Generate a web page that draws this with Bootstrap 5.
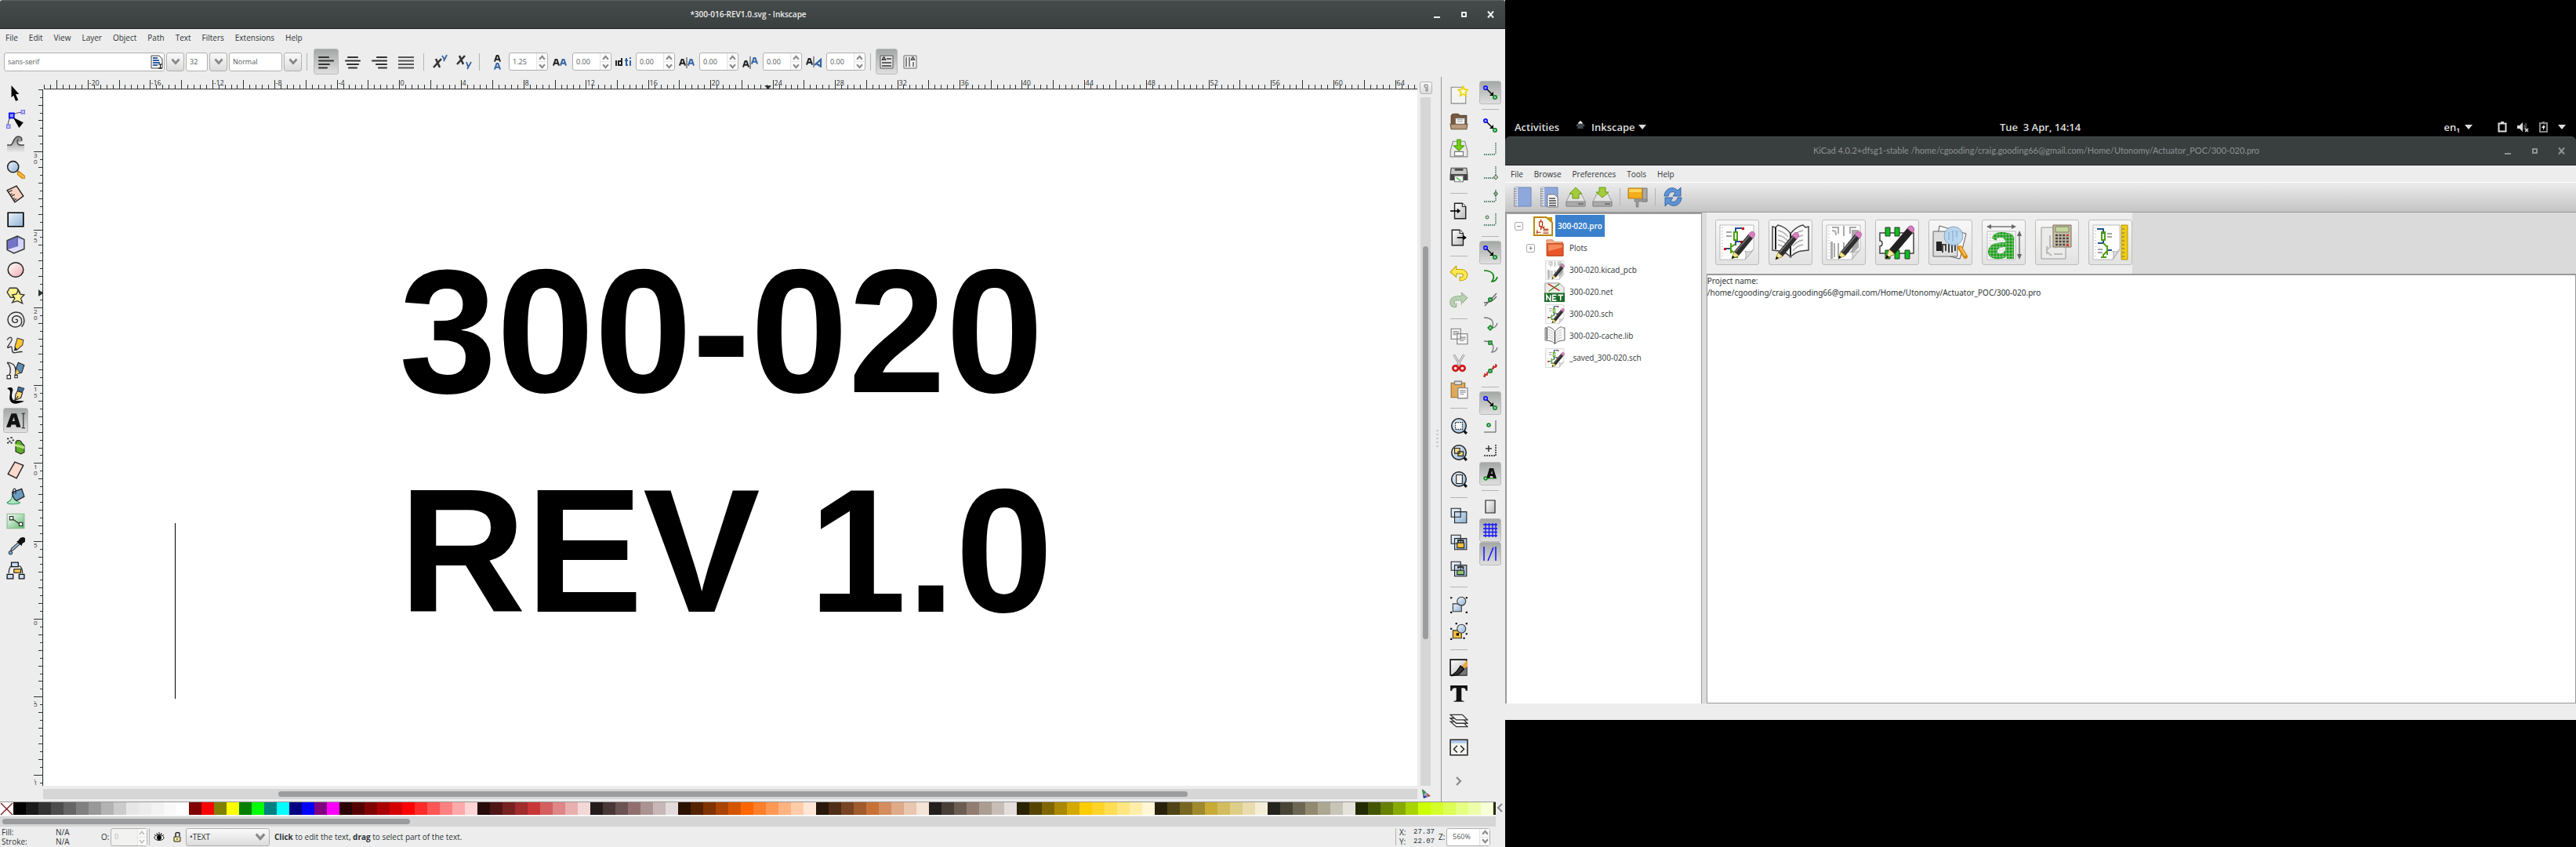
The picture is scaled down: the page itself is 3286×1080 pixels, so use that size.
<!DOCTYPE html>
<html lang="en">
<head>
<meta charset="utf-8">
<meta name="viewport" content="width=device-width, initial-scale=1">
<title>Inkscape and KiCad desktop</title>
<link href="https://cdn.jsdelivr.net/npm/bootstrap@5.3.0/dist/css/bootstrap.min.css" rel="stylesheet">
<style>
:root{--ui:#ededed;--line:#b0b0ad;--ink:#2e3436}
body{font-family:"Open Sans","Noto Sans",sans-serif;font-size:10px;line-height:14px;color:var(--ink);background:#000;overflow:hidden}
svg{display:block;flex:none}
button{padding:0;border:0;background:none;color:inherit;display:flex;align-items:center;justify-content:center;flex:none}
input,select{font:inherit;color:#555b5c;border:0;background:none;min-width:0;padding:0;outline:0}
.i22{width:24px;height:24px}.i18{width:20px;height:20px}
.win-ink{flex:1920 1 0;min-width:0;background:var(--ui)}
.win-side{flex:1366 1 0;min-width:0;padding-top:147px;padding-bottom:162px}
.titlebar{height:37px;background:linear-gradient(#454b4b,#3a3f3f);border-top:1px solid #5a6060;border-bottom:1px solid #1d2223;color:#eee;border-radius:3px 3px 0 0;font-weight:600;padding:0 11px 1px 0}
.titlebar.idle{background:#393f3f;color:#8d9191;font-family:Lato,"Open Sans",sans-serif;font-size:11px;font-weight:400;border-top-color:#4c5252;border-radius:6px 6px 0 0}
.wbtn{width:16px;height:16px;margin-left:18px}
.menus a{color:var(--ink);text-decoration:none}
.ink-menu{height:22px;padding:0 7px;gap:14px}
.textbar{height:39px;padding:3px 5px;gap:2px;font-size:9px;flex:none}
.fld{height:24px;border:1px solid var(--line);border-radius:3px;background:#fff;padding-left:4px}
.grad{background:linear-gradient(#fafafa,#dcdcdc);border:1px solid var(--line);border-radius:3px}
.drop{width:23px;height:24px}
.vsep{width:1px;height:22px;background:#b4b4b2;flex:none}
.pressed{background:linear-gradient(#a3a8a5,#dfdfdf);border:1px solid #b9bbb9;border-radius:3px}
.spin{width:50px;height:23px;border:1px solid var(--line);border-radius:3px;background:#fff;padding-left:4px;flex:none}
.spin input{width:30px}
.spin .steps{width:13px;border-left:1px solid #e4e4e4;background:#fafafa}
.spin .steps button{flex:1;width:100%}
.spin .steps button+button{border-top:1px solid #e4e4e4}
.spin.off{background:#f2f2f1}.spin.off input{color:#bbb}
.lbl{width:24px;height:24px;margin-left:3px}
.toolbox{width:35px;padding:6px 0 0 4px;flex:none}
.tool{width:32px;height:32px}
.trough{background:#d6d6d6}
.thumb{background:#9b9c9e;border-radius:4px}
.cmds{width:45px;border-left:1px solid #999;padding-top:6px}
.cmds .tool{width:34px;height:34px}
.snaps{width:37px;padding:5px 1px 0 0}
.snaps button{width:28px;height:30px}
.hsep{width:22px;height:1px;margin:6px 0 5px;background:#b4b4b2;flex:none}
.art{background:#fff;padding:168px 0 0 453px;position:relative;overflow:hidden;font:bold 224px/280px "Liberation Sans",Arial,sans-serif;color:#000;white-space:nowrap}
.caret-bar{position:absolute;left:167px;top:553px;width:1px;height:224px;background:#000}
.swatches{height:17px;overflow:hidden;background:#fff}
.swatches i{width:16px;height:16px;flex:none}
.status{height:26px;line-height:12px;flex:none}
.status .spin{font-size:9px}
.mono{font-family:"Liberation Mono",monospace;font-size:9px}
.topbar{height:27px;color:#ddd;font-weight:600;font-size:13px;padding:3px 13px 0 12px}
.topbar a{color:inherit;text-decoration:none}
.ki-menu{height:21px;background:var(--ui);padding:0 7px;gap:14px}
.ki-tools{height:39px;background:linear-gradient(#ececec,#c4c4c4);border-top:1px solid #fff;border-bottom:1px solid #999;padding:0 8px 2px;gap:6px}
.ki-tools button,.ki-tools svg{width:28px;height:28px}
.ki-tools .vsep{margin:0 2px}
.tree{flex:248 1 0;background:#fff;border:2px solid #9c9c9c;border-width:2px 1px 1px 2px;padding-top:1px;margin-bottom:-1px;min-width:0}
.node{height:28px;gap:2px}
.node svg.fi{width:27px;height:27px}
.node span{padding:0 3px}
.exp{width:11px;height:11px;border:1px solid #aaa;border-radius:2px;background:#fff;line-height:9px;color:#555}
.sash{width:6px;background:#dcdcdc}
.launch{height:78px;background:#dadada;flex:none}
.launch-in{background:var(--ui);padding:9px 0 0 11px;gap:12px;width:543px}
.launch .grad{width:56px;height:58px;border-color:#bdbdbd;background:linear-gradient(#f7f7f7,#e2e2e2)}
.launch svg{width:48px;height:50px}
.log{background:#fff;border:1px solid #999;border-top-width:2px;font-family:"Noto Sans","Open Sans",sans-serif}
.log p{margin:0;line-height:15px}
</style>
<script src="https://cdn.jsdelivr.net/npm/bootstrap@5.3.0/dist/js/bootstrap.bundle.min.js"></script>
</head>
<body>
<svg width="0" height="0" class="position-absolute" aria-hidden="true">
<defs>
<linearGradient id="gb" x1="0" y1="0" x2="1" y2="1"><stop offset="0" stop-color="#eef4fb"/><stop offset="1" stop-color="#8fb3d5"/></linearGradient>
<linearGradient id="gg" x1="0" y1="0" x2="1" y2="1"><stop offset="0" stop-color="#fff"/><stop offset="1" stop-color="#b8b8b8"/></linearGradient>
<linearGradient id="gp" x1="0" y1="0" x2="1" y2="1"><stop offset="0" stop-color="#fff"/><stop offset="1" stop-color="#f4a9b0"/></linearGradient>
<linearGradient id="gk" x1="0" y1="0" x2="0" y2="1"><stop offset="0" stop-color="#888"/><stop offset="1" stop-color="#eee"/></linearGradient>
<linearGradient id="gn" x1="0" y1="0" x2="1" y2="1"><stop offset="0" stop-color="#fff"/><stop offset="1" stop-color="#5cb86a"/></linearGradient>
<symbol id="up" viewBox="0 0 8 6"><path d="M1 5 4 1.500 7 5" fill="none" stroke="#888" stroke-width="1.800"/></symbol>
<symbol id="down" viewBox="0 0 8 6"><path d="M1 1 4 4.500 7 1" fill="none" stroke="#888" stroke-width="1.800"/></symbol>
<symbol id="min" viewBox="0 0 16 16"><path d="M4 11h8v2H4z" fill="currentColor"/></symbol>
<symbol id="max" viewBox="0 0 16 16"><path d="M6 6h5v5H6z" fill="none" stroke="currentColor" stroke-width="2"/></symbol>
<symbol id="cls" viewBox="0 0 16 16"><path d="M5 4.500l7 8M12 4.500l-7 8" stroke="currentColor" stroke-width="2"/></symbol>
<symbol id="al" viewBox="0 0 24 24"><g stroke="#333" stroke-width="2.200" stroke-linecap="round"><path d="M3 6h12M3 10.500h18M3 15h13M3 19.500h10"/></g></symbol>
<symbol id="ac" viewBox="0 0 24 24"><g stroke="#333" stroke-width="2.200" stroke-linecap="round"><path d="M6 6h12M3 10.500h18M5 15h14M7 19.500h10"/></g></symbol>
<symbol id="ar" viewBox="0 0 24 24"><g stroke="#333" stroke-width="2.200" stroke-linecap="round"><path d="M9 6h12M3 10.500h18M8 15h13M11 19.500h10"/></g></symbol>
<symbol id="aj" viewBox="0 0 24 24"><g stroke="#555" stroke-width="2.200"><path d="M2 6h20M2 10.500h20M2 15h20M2 19.500h20"/></g></symbol>
<symbol id="sup" viewBox="0 0 24 24"><path d="M7 8l5 11M14 8 4 19" stroke="#333" stroke-width="2.600" fill="none"/><path d="M15 4l3 5M21 3l-4 8" stroke="#3465a4" stroke-width="1.800" fill="none"/></symbol>
<symbol id="sub" viewBox="0 0 24 24"><path d="M6 4l5 11M13 4 3 15" stroke="#333" stroke-width="2.600" fill="none"/><path d="M15 12l2 6M21 12l-5 9" stroke="#3465a4" stroke-width="1.800" fill="none"/></symbol>
<symbol id="ga" viewBox="0 0 10 10"><path d="M1 9.500 4 1h2l3 8.500M2.500 6.500h5" fill="none" stroke="currentColor" stroke-width="2.200"/></symbol>
<symbol id="t-sel" viewBox="0 0 22 22"><path d="M6 1l9 10h-4l3 7-3 1-2.500-6.500L6 15z"/></symbol>
<symbol id="t-node" viewBox="0 0 22 22"><path d="M2 19C2 8 8 3 19 3" fill="none" stroke="#555"/><path d="M.5 17.500h4v4h-4zM17.500.5h4v4h-4z" fill="#c5c5ff" stroke="#6a6af0"/><path d="M3.500 4h5.500v5.500H3.500z" fill="#9494ff" stroke="#00f" stroke-width="1.500"/><path d="M8 9l12 6-5 6z"/></symbol>
<symbol id="t-tweak" viewBox="0 0 22 22"><path d="M1 12h4c3 0 3-9 8-10 4-.5 6 2 5 5-1 2-3 2-4 0 0 0-2 5 2 5h5v9H1z" fill="url(#gk)"/><path d="M1 12h4c3 0 3-9 8-10 4-.5 6 2 5 5M14 5c-2 3-1 7 3 7h4" fill="none" stroke="#444" stroke-width="1.400"/></symbol>
<symbol id="t-zoom" viewBox="0 0 22 22"><path d="M13 13l3 2" stroke="#777" stroke-width="2"/><path d="M15 16l5 4" stroke="#c77c00" stroke-width="5" stroke-linecap="round"/><path d="M15 16l5 4" stroke="#f9b83c" stroke-width="3" stroke-linecap="round"/><circle cx="8" cy="8" r="6.500" fill="url(#gb)" stroke="#222" stroke-width="1.400"/></symbol>
<symbol id="t-meas" viewBox="0 0 22 22"><path d="M1 6l11-5 8 12-10 7z" fill="#fbd3c2" stroke="#222" stroke-width="1.300"/><path d="M3 8l4-2M5 11l2-1M6 13l4-2M8 16l2-1M9 18l3-2" stroke="#222"/></symbol>
<symbol id="t-rect" viewBox="0 0 22 22"><path d="M2 3h18v16H2z" fill="url(#gb)" stroke="#000" stroke-width="1.500"/></symbol>
<symbol id="t-box" viewBox="0 0 22 22"><path d="M1 6 13 1l8 4v11l-12 5-8-4z" fill="#b4b4ee"/><path d="M9 4l12 1v11l-7-2z" fill="#d4d4fa"/><path d="M1 6l12-5v12L1 17z" fill="#7474c4"/><path d="M1 17l12-4 8 3-12 5z" fill="#dcdcff"/><path d="M13 1v12" stroke="#50509a"/><path d="M1 6 13 1l8 4v11l-12 5-8-4z" fill="none" stroke="#333" stroke-width="1.300"/></symbol>
<symbol id="t-ell" viewBox="0 0 22 22"><ellipse cx="11" cy="11" rx="9" ry="8.500" fill="url(#gp)" stroke="#222" stroke-width="1.400"/></symbol>
<symbol id="t-star" viewBox="0 0 22 22"><path d="M4 3h8l4 5-4 6H5L1 8z" fill="#fbf28c" stroke="#333" stroke-width="1.200"/><path d="M14 5l2 5 5 1-4 4 2 6-6-3-6 2 3-5-3-4 5-1z" fill="#fbf28c" stroke="#333" stroke-width="1.200"/></symbol>
<symbol id="t-spi" viewBox="0 0 22 22"><path d="M11 11c1-2 3 0 2 2-2 2-6 1-6-2 0-4 4-6 8-4s4 9 0 11c-5 3-12 0-13-6C1 6 7 1 13 2c5 0 8 5 8 10 0 3-1 5-3 7" fill="none" stroke="#333" stroke-width="1.300"/></symbol>
<symbol id="t-pen" viewBox="0 0 22 22"><path d="M1 5c3-5 7-3 5 1-2 4-6 8-4 8s3-2 4-1c2 2-1 6 3 7 4 0 6-2 10-1" fill="none" stroke="#333" stroke-width="1.200"/><path d="M10 13l3-10 7 2-1 6-7 6z" fill="#ffc52e" stroke="#444"/><path d="M10 13l-1 5 4-2z" fill="#222"/></symbol>
<symbol id="t-bez" viewBox="0 0 22 22"><path d="M1 2c7 1 11 2 10 16M1 2c4 4 5 10 2 16" fill="none" stroke="#333" stroke-width="1.200"/><path d="M1 17h4v4H1zM10 17h3v3h-3z" fill="#fff" stroke="#222"/><path d="M14 2l7 3-3 9-6 1-1-5z" fill="#5b8db5" stroke="#222"/><path d="M12 9l-2 8 6-3z" fill="#f7cf62" stroke="#222" stroke-width=".7"/></symbol>
<symbol id="t-cal" viewBox="0 0 22 22"><path d="M1 3c5-3 8 0 6 4-1 4-1 8 2 10 3 1 6 0 12 1-6 2-10 4-14 2-6-4-1-11-3-15z"/><path d="M14 1l7 2-2 4-6-1z" fill="#3e6e9a" stroke="#222" stroke-width=".8"/><path d="M13 6l6 2-2 6-7 3 1-7z" fill="#fbd77c" stroke="#222"/><path d="M10 17l4-5" stroke="#222"/></symbol>
<symbol id="t-text" viewBox="0 0 22 22"><path d="M0 19 6 3h6l5 16h-5l-1-3H6l-1 3zM7 12h3L9 7z" fill="#111"/><path d="M18 3h4M18 20h4M20 3v17" stroke="#222"/></symbol>
<symbol id="t-spray" viewBox="0 0 22 22"><path d="M1 3h2M5 2h2M3 6h2M7 5h2M1 8h2M5 8h2" stroke="#222" stroke-width="1.600"/><path d="M11 8c0-4 6-4 7 0l3 3v8l-4 2-6-3z" fill="#5cae28" stroke="#222"/><path d="M10 9l11 3v3l-11-3z" fill="#b3e37a"/></symbol>
<symbol id="t-era" viewBox="0 0 22 22"><path d="M10 1l10 4-8 15-10-5z" fill="#fbd9cc" stroke="#222" stroke-width="1.300"/></symbol>
<symbol id="t-buck" viewBox="0 0 22 22"><path d="M1 19c3-2 5-2 6-8l3-4c2 7-1 10 6 12 0 2-15 3-15 0z" fill="#aee3c0" stroke="#396"/><path d="M7 7l11-4 3 9-9 5c-3-2-5-6-5-10z" fill="#6b9cc0" stroke="#222" stroke-width="1.200"/><path d="M9 9c-3-5 1-8 2-5v5" fill="none" stroke="#222"/></symbol>
<symbol id="t-grad" viewBox="0 0 22 22"><path d="M1 3h20v17H1z" fill="url(#gn)" stroke="#86b78d"/><path d="M6 8l10 7" stroke="#222"/><path d="M4 6h4v4H4zM15 13h4v4h-4z" fill="#fff" stroke="#222"/></symbol>
<symbol id="t-drop" viewBox="0 0 22 22"><path d="M14 7l2 2-8 7-3 1 1-3z" fill="#9bc3e6" stroke="#333"/><path d="M12 6l2-1c2-4 6-5 8-3s0 5-3 6l-1 3z" fill="#111"/><circle cx="5" cy="19" r="2" fill="#7fa9cf" stroke="#345"/></symbol>
<symbol id="t-conn" viewBox="0 0 22 22"><path d="M6 5C3 7 3 11 3 14M15 5c4 2 4 6 4 9" fill="none" stroke="#333" stroke-width="1.200"/><path d="M6 1h8v5H6zM1 15h7v5H1zM15 15h6v5h-6z" fill="#c9defa" stroke="#111" stroke-width="1.200"/><path d="M9 9h8v4H9z" fill="#ffc64a" stroke="#111"/></symbol>
<symbol id="c-new" viewBox="0 0 22 22"><path d="M2 2h13l4 4v15H2z" fill="#f4f4f2" stroke="#888"/><path d="M16 1l1.500 3.500 4 .5-3 3 1 4-3.500-2-3.500 2 1-4-3-3 4-.5z" fill="#fffbd0" stroke="#edd400" stroke-width="1.500"/></symbol>
<symbol id="c-open" viewBox="0 0 22 22"><path d="M2 4l2-2h6l2 2h8v13H2z" fill="#7a5a3c" stroke="#54402c"/><path d="M7 7h11v10H7z" fill="#fff" stroke="#777"/><path d="M9 9h7M9 11h7" stroke="#999"/><path d="M1 14h20l-1 6H2z" fill="#b79a7c" stroke="#6b5238"/></symbol>
<symbol id="c-save" viewBox="0 0 22 22"><path d="M4 3h14l3 11v7H1v-7z" fill="#e8e8e6" stroke="#888"/><path d="M6 15h10v5H6z" fill="#fff" stroke="#777"/><path d="M9 1h4v7h4l-6 6-6-6h4z" fill="#73d216" stroke="#4a9a06"/></symbol>
<symbol id="c-print" viewBox="0 0 22 22"><path d="M2 3h18l1 8v6H1v-6z" fill="#c9c9c7" stroke="#444"/><path d="M1 10h20v7H1z" fill="#444"/><path d="M6 5h10" stroke="#333" stroke-width="2"/><path d="M6 12h10v7H6z" fill="#fff" stroke="#777"/><path d="M8 14l5 4" stroke="#7c7" stroke-width="2"/></symbol>
<symbol id="c-imp" viewBox="0 0 22 22"><path d="M6 2h9l4 4v14H6z" fill="url(#gg)" stroke="#222" stroke-width="1.300"/><path d="M15 2v4h4" fill="#fff" stroke="#222"/><path d="M1 11h10" stroke="#000" stroke-width="1.500"/><path d="M9 8l4 3-4 3z"/></symbol>
<symbol id="c-exp" viewBox="0 0 22 22"><path d="M3 2h9l4 4v14H3z" fill="url(#gg)" stroke="#222" stroke-width="1.300"/><path d="M12 2v4h4" fill="#fff" stroke="#222"/><path d="M9 11h9" stroke="#000" stroke-width="1.500"/><path d="M16 8l4 3-4 3z"/></symbol>
<symbol id="c-undo" viewBox="0 0 22 22"><path d="M8 2v4h6c10 1 9 14-2 13v-4c5 1 5-4 2-4H8v4L1 9z" fill="#fce94f" stroke="#c4a000" stroke-linejoin="round"/></symbol>
<symbol id="c-redo" viewBox="0 0 22 22"><path d="M14 2v4H9C-1 7-2 17 5 19h3v-4c-4 0-3-4 0-4h6v4l7-7z" fill="#b9d0b2" stroke="#7a9a72" stroke-dasharray="1.500 1"/></symbol>
<symbol id="c-copy" viewBox="0 0 22 22"><path d="M2 2h11v12H2zM9 8h12v12H9z" fill="#fafafa" stroke="#777"/><path d="M4 5h7M4 7h7M4 9h4M12 12h7M12 14h7M12 16h5" stroke="#888"/></symbol>
<symbol id="c-cut" viewBox="0 0 22 22"><path d="M5 1l8 13M17 1L9 14" stroke="#888" stroke-width="2.500"/><path d="M5 1l8 13M17 1L9 14" stroke="#eee"/><circle cx="7" cy="17" r="3" fill="none" stroke="#d01a1a" stroke-width="2.500"/><circle cx="15" cy="17" r="3" fill="none" stroke="#d01a1a" stroke-width="2.500"/></symbol>
<symbol id="c-paste" viewBox="0 0 22 22"><path d="M2 3h16v17H2z" fill="#e0a85a" stroke="#9a6a20"/><path d="M6 1h8v4H6z" fill="#ddd" stroke="#777"/><path d="M10 9h11v12H10z" fill="#fff" stroke="#777"/><path d="M12 12h7M12 14h7M12 16h5" stroke="#888"/></symbol>
<symbol id="lens" viewBox="0 0 22 22"><path d="M16 16l4 4" stroke="#111" stroke-width="3"/><circle cx="11" cy="11" r="8.500" fill="url(#gb)" stroke="#222" stroke-width="1.400"/></symbol>
<symbol id="c-zs" viewBox="0 0 22 22"><use href="#lens"/><path d="M7 7h8v8H7z" fill="#fff" stroke="#222" stroke-dasharray="1.500 1"/></symbol>
<symbol id="c-zd" viewBox="0 0 22 22"><use href="#lens"/><path d="M6 6h6v6H6zM10 10h6v5h-6z" fill="#f7d77c" stroke="#222"/></symbol>
<symbol id="c-zp" viewBox="0 0 22 22"><use href="#lens"/><path d="M8 6h7v10H8z" fill="#f2f2ee" stroke="#222"/></symbol>
<symbol id="c-dup" viewBox="0 0 22 22"><path d="M2 3h11v10H2zM6 7h14v13H6z" fill="url(#gb)" stroke="#222"/></symbol>
<symbol id="c-clo" viewBox="0 0 22 22"><use href="#c-dup"/><path d="M10 12v-3h6v3" fill="none" stroke="#222" stroke-width="1.500"/><path d="M9 12h8v6H9z" fill="#fbbf3a" stroke="#222"/></symbol>
<symbol id="c-unl" viewBox="0 0 22 22"><use href="#c-dup"/><path d="M10 11v-2h6v3" fill="none" stroke="#222" stroke-width="1.500"/><path d="M9 13h8v5H9z" fill="#8ec36c" stroke="#222"/></symbol>
<symbol id="c-grp" viewBox="0 0 22 22"><path d="M4 10h10v9H4z" fill="url(#gb)" stroke="#333"/><circle cx="14" cy="7" r="5" fill="url(#gb)" stroke="#333"/><path d="M1 2h2v2H1zM19 2h2v2h-2zM1 19h2v2H1zM19 19h2v2h-2z"/></symbol>
<symbol id="c-ung" viewBox="0 0 22 22"><path d="M4 10h10v9H4z" fill="#fbbf3a" stroke="#333"/><circle cx="14" cy="8" r="5" fill="url(#gb)" stroke="#333"/><path d="M7 1h2v2H7zM19 1h2v2h-2zM1 7h2v2H1zM1 19h2v2H1zM16 18h2v2h-2zM8 13h3v3H8zM19 13h2v2h-2z"/></symbol>
<symbol id="c-fill" viewBox="0 0 22 22"><path d="M1 2h19v18H1z" fill="url(#gg)" stroke="#111" stroke-width="1.500"/><path d="M20 5v15H3z" fill="#777"/><path d="M21 2v8l-4 2-2-3z" fill="#f2a63a"/><path d="M13 9l4 4-6 6-9 2 6-5z" fill="#333" stroke="#000"/></symbol>
<symbol id="c-T" viewBox="0 0 22 22"><path d="M1 1h20v6h-2c0-3-2-3-5-3v13c0 2 1 2 3 2v1H5v-1c2 0 3 0 3-2V4C5 4 3 4 3 7H1z" fill="#111"/></symbol>
<symbol id="c-lay" viewBox="0 0 22 22"><g fill="#f2f2f2" stroke="#333" stroke-width="1.200"><path d="M1 12h14l6 6H8z"/><path d="M1 8h14l6 6H8z"/><path d="M1 4h14l6 6H8z"/></g></symbol>
<symbol id="c-xml" viewBox="0 0 22 22"><path d="M1 2h20v18H1z" fill="#f2f2ee" stroke="#222" stroke-width="1.400"/><path d="M2 3h18v3H2z" fill="#a9c6e8"/><path d="M9 9l-4 4 4 4M13 9l4 4-4 4" fill="none" stroke="#222" stroke-width="1.300"/></symbol>
<symbol id="chev" viewBox="0 0 10 12"><path d="M2 1l5 5-5 5" fill="none" stroke="#8a8a8a" stroke-width="2.200"/></symbol>
<symbol id="s-on" viewBox="0 0 20 20"><path d="M5 5l8 8" stroke="#000" stroke-width="1.400"/><path d="M14 9v5H9z"/><circle cx="4" cy="4" r="2.300" fill="#9a9aff" stroke="#00f" stroke-width="1.400"/><circle cx="16" cy="16" r="2.300" fill="#8fcfe0" stroke="#0a820a" stroke-width="1.400"/></symbol>
<symbol id="s-bb" viewBox="0 0 20 20"><path d="M2 17h15M17 2v15" stroke="#264" stroke-width="1.300" stroke-dasharray="1.500 1" fill="none"/></symbol>
<symbol id="s-bc" viewBox="0 0 20 20"><use href="#s-bb"/><path d="M17 13l3 3-3 3-3-3z" fill="#bcb" stroke="#464"/></symbol>
<symbol id="s-be" viewBox="0 0 20 20"><use href="#s-bb"/><path d="M17 4l2.500 3-2.500 3-2.500-3z" fill="#8a8" stroke="#464"/></symbol>
<symbol id="s-bm" viewBox="0 0 20 20"><use href="#s-bb"/><circle cx="6" cy="7" r="2" fill="#cdc" stroke="#464"/></symbol>
<symbol id="s-path" viewBox="0 0 20 20"><path d="M2 3c12 0 15 7 10 14 4 0 6-2 7-6" fill="none" stroke="#0f820f" stroke-width="1.700"/></symbol>
<symbol id="s-int" viewBox="0 0 20 20"><path d="M3 18 18 2M2 14c7 0 13-4 16-8" stroke="#666" stroke-width="1.300" fill="none"/><circle cx="10" cy="10" r="2.300" fill="#7ab" stroke="#0a820a" stroke-width="1.400"/></symbol>
<symbol id="s-cusp" viewBox="0 0 20 20"><path d="M2 3c12 0 13 7 10 13 4 0 6-2 7-6" fill="none" stroke="#777" stroke-width="1.300"/><path d="M10 13l3 3-3 3-3-3z" fill="#7c9" stroke="#0a820a" stroke-width="1.400"/></symbol>
<symbol id="s-smo" viewBox="0 0 20 20"><path d="M2 3c12 0 14 7 10 14 4 0 6-2 7-6" fill="none" stroke="#777" stroke-width="1.300"/><path d="M8 3h4v4H8z" fill="#8ac" stroke="#0a820a" stroke-width="1.400"/></symbol>
<symbol id="s-mid" viewBox="0 0 20 20"><path d="M2 19 18 3" stroke="#777"/><path d="M3 14v5M6 12v5M1 18l6-4M14 4v5M17 2v5M12 8l7-4" stroke="#c22" stroke-width="1.500"/><circle cx="10" cy="11" r="2.300" fill="#7ab" stroke="#0a820a" stroke-width="1.400"/></symbol>
<symbol id="s-oth" viewBox="0 0 20 20"><path d="M2 17h15V2" stroke="#555" fill="none"/><circle cx="8" cy="8" r="2" fill="#9cf" stroke="#0a820a" stroke-width="1.500"/></symbol>
<symbol id="s-ctr" viewBox="0 0 20 20"><path d="M2 17h15V2" stroke="#222" fill="none" stroke-width="1.400" stroke-dasharray="2 1"/><path d="M8 4v8M4 8h8" stroke="#333" stroke-width="1.500"/></symbol>
<symbol id="s-txt" viewBox="0 0 20 20"><path d="M5 16 9 3h5l4 13h-4l-1-3h-3l-1 3zM11 10h2l-1-4z" fill="#111"/><path d="M5 16h13" stroke="#0a820a"/><circle cx="4" cy="16" r="2" fill="#acf" stroke="#0a820a" stroke-width="1.300"/></symbol>
<symbol id="s-page" viewBox="0 0 20 20"><path d="M4 2h12v16H4z" fill="url(#gg)" stroke="#222" stroke-width="1.200"/></symbol>
<symbol id="s-grid" viewBox="0 0 20 20"><path d="M4 1v18M8.500 1v18M13 1v18M17 1v18M1 3h18M1 8h18M1 12.500h18M1 17h18" stroke="#11f" stroke-width="1.300"/></symbol>
<symbol id="s-guide" viewBox="0 0 20 20"><path d="M2 1v18M17 1v18M7 19 14 2" stroke="#11f" stroke-width="1.500"/></symbol>
<symbol id="pencil" viewBox="0 0 48 50"><path d="M20 37 38 15l6 5-18 22z" fill="#2e2e2e"/><path d="M22 37 40 16" stroke="#777" stroke-width="1.500"/><path d="M38 15l3-3c3-2 7 1 5 5l-2 3z" fill="#d97fc0" stroke="#a5508c" stroke-width=".7"/><path d="M20 37l-3 9 9-4z" fill="#f4e58a" stroke="#8d7a20" stroke-width=".7"/><path d="M17 46l1-4 3 2z"/></symbol>
<symbol id="sheet" viewBox="0 0 48 50"><path d="M2 3h43v31L34 47H2z" fill="#fdfdfd" stroke="#bbb"/><path d="M34 47c2-4 1-8 0-11 4 2 8 1 11-2z" fill="#ddd" stroke="#aaa"/><path d="M5 6v38" stroke="#999" stroke-dasharray="1 3"/></symbol>
<symbol id="circ" viewBox="0 0 48 50"><path d="M31 7h-9v6M22 23v6M22 24h7M8 33h7" stroke="#1f4f93" stroke-width="2" fill="none"/><path d="M20 12h4v10h-4zM16 26v13M16 31l6-4M16 35l6 5v4M18 44h7" fill="none" stroke="#4c9f12" stroke-width="2"/><path d="M10 12h7M10 17h7" stroke="#888" stroke-width="1.500"/><path d="M30 6h3v3h-3zM28 23h3v3h-3zM7 32h3v3H7z" fill="#c00"/></symbol>
<symbol id="k-sch" viewBox="0 0 48 50"><use href="#sheet"/><use href="#circ"/><use href="#pencil"/></symbol>
<symbol id="book" viewBox="0 0 48 50"><path d="M1 5l4 1 3-3c6 1 13 6 16 11 4-5 10-10 16-11l3 3 4-1v30l-9 1c-6 1-10 3-14 8-4-5-8-7-14-8l-9-1z" fill="#fafafa" stroke="#444" stroke-width="1.500"/><path d="M24 14v28M5 6v28" stroke="#222" stroke-width="2"/><path d="M8 10c6 1 10 4 13 8M8 16c6 1 10 4 13 8M8 22c6 1 10 4 13 8M8 28c6 1 10 4 13 8M40 10c-6 1-10 4-13 8M40 16c-6 1-10 4-13 8M40 22c-6 1-10 4-13 8M40 28c-6 1-10 4-13 8" fill="none" stroke="#aaa" stroke-width="1.300"/></symbol>
<symbol id="k-lib" viewBox="0 0 48 50"><use href="#book"/><use href="#pencil" x="-12" y="1"/></symbol>
<symbol id="pcb" viewBox="0 0 48 50"><use href="#sheet"/><path d="M9 6h8v8M9 10c4 0 5 1 5 6M24 4v13M40 6h-8v8M42 10h-5v6M12 44V26M17 44V26M24 40V25M30 38V25" fill="none" stroke="#aaa" stroke-width="2"/><path d="M34 9h9v23l-7 6h-5c4-3 4-6 3-10z" fill="#aaa"/><path d="M7 24h3v22H7z" fill="#aaa"/></symbol>
<symbol id="k-pcb" viewBox="0 0 48 50"><use href="#pcb"/><use href="#pencil"/></symbol>
<symbol id="k-mod" viewBox="0 0 48 50"><path d="M2 13h43v26H2v-9c4 0 4-7 0-7z" fill="#fff" stroke="#444" stroke-width="1.500"/><path d="M9 6h6v11H9zM21 6h6v11h-6zM9 35h6v11H9zM21 35h6v11h-6zM34 35h6v11h-6z" fill="#0bbf1c" stroke="#333"/><path d="M14 34 37 7l7 6-23 27z" fill="#222"/><path d="M37 7l2-2c4-3 8 2 6 6l-1 2z" fill="#d97fc0" stroke="#a5508c"/><path d="M14 34l-5 12 12-6z" fill="#f4e9a8" stroke="#8d7a20"/><path d="M9 46l2-5 3 3z"/></symbol>
<symbol id="k-ger" viewBox="0 0 48 50"><path d="M10 4l34 10-8 32L4 38z" fill="#fff" stroke="#555"/><path d="M2 11h31v32H2z" fill="#ddd" stroke="#666"/><path d="M6 24h7v12H6z" fill="#222"/><path d="M14 38V28h4v8M22 38V26M26 38V26M30 36V26" stroke="#444" stroke-width="2" fill="none"/><path d="M36 32l7 11" stroke="#d98a10" stroke-width="6" stroke-linecap="round"/><path d="M36 31l7 11" stroke="#ffc661" stroke-width="2"/><circle cx="28" cy="17" r="12" fill="#b7d6ef" stroke="#7d9cb8" opacity=".92"/><path d="M22 12v10M27 10v14M32 10v8" stroke="#7fa8cc" fill="none"/></symbol>
<symbol id="k-bmp" viewBox="0 0 48 50"><path d="M3 11h36v36H3z" fill="#fff" stroke="#bbb"/><path d="M9 20c1-8 12-9 20-7 8 1 9 6 8 11v22h-9v-3c-6 5-23 5-24-5 0-12 12-13 22-13 0-5-3-6-7-6-3 0-4 1-4 4zM26 31c-7 0-10 2-10 6s9 3 10-3z" fill="#0aa00a" fill-rule="evenodd"/><path d="M7 11v36M11 11v36M15 11v36M19 11v36M23 11v36M27 11v36M31 11v36M35 11v36M3 15h36M3 19h36M3 23h36M3 27h36M3 31h36M3 35h36M3 39h36M3 43h36" stroke="#ccc" stroke-opacity=".7"/><path d="M4 5h34M44 13v31" stroke="#777" stroke-width="1.500"/><path d="M2 5l6-3v6zM40 5l-6-3v6zM44 10l-3 7h6zM44 47l-3-7h6z" fill="#666"/></symbol>
<symbol id="k-calc" viewBox="0 0 48 50"><path d="M4 6h31v40H4z" fill="#ebebe9" stroke="#999"/><path d="M15 16v14M11 30v10M11 34l6-4M11 37l6 5M20 40h11" stroke="#bbb" stroke-width="2" fill="none"/><path d="M19 3h23v28H19z" fill="#cabfa9" stroke="#7a6c56"/><path d="M22 5h17v7H22z" fill="#c5d6a0" stroke="#7a8060"/><path d="M22 16h17M22 20h17M22 24h17M22 28h17" stroke="#444" stroke-width="2.600" stroke-dasharray="3 1.600"/><path d="M36 15h3v2h-3zM36 27h3v3h-3z" fill="#d33"/></symbol>
<symbol id="k-pl" viewBox="0 0 48 50"><path d="M2 3h34v31l-9 13H2z" fill="#fdfdfd" stroke="#bbb"/><path d="M27 47c2-4 1-8 0-11 4 2 6 1 9-2z" fill="#ddd" stroke="#aaa"/><path d="M5 6v38" stroke="#999" stroke-dasharray="1 3"/><path d="M7 8h8v6M15 22v4M8 26h7M20 35h6" stroke="#1f4f93" stroke-width="2" fill="none"/><path d="M13 12h4v10h-4zM20 29v12M15 26l5 5M20 36l-5 5v3M12 44h7" fill="none" stroke="#4c9f12" stroke-width="2"/><path d="M20 14h6M20 18h6M8 34h6M8 38h6" stroke="#888" stroke-width="1.500"/><path d="M38 3h8v44h-8z" fill="#f0cb16" stroke="#b59600"/><path d="M39 8h3M39 13h3M39 18h3M39 23h3M39 28h3M39 33h3M39 38h3M39 43h3" stroke="#765"/></symbol>
<symbol id="k-nb" viewBox="0 0 28 28"><path d="M4 2h21v24H4z" fill="#8fa8dc" stroke="#7086ba"/><path d="M4 2h4v24H4z" fill="#e6e6ee"/><path d="M3 4h4M3 7h4M3 10h4M3 13h4M3 16h4M3 19h4M3 22h4M3 25h4" stroke="#777"/></symbol>
<symbol id="k-nb2" viewBox="0 0 28 28"><use href="#k-nb"/><path d="M12 11h9l4 4v12H12z" fill="#fff" stroke="#777"/><path d="M14 16h8M14 19h9M14 22h9M14 25h9" stroke="#444" stroke-width="1.300"/></symbol>
<symbol id="k-hd" viewBox="0 0 28 28"><path d="M7 10h14l5 10v6H2v-6z" fill="#e2e2e2" stroke="#999"/><path d="M2 20h24v6H2z" fill="#aaa" stroke="#888"/><path d="M17 23h7" stroke="#777" stroke-width="2"/></symbol>
<symbol id="k-up" viewBox="0 0 28 28"><use href="#k-hd"/><path d="M14 2l8 8h-4v6h-8v-6H6z" fill="#a3cc3c" stroke="#6b9a12"/></symbol>
<symbol id="k-dn" viewBox="0 0 28 28"><use href="#k-hd"/><path d="M14 15l8-7h-4V2h-8v6H6z" fill="#a3cc3c" stroke="#6b9a12"/></symbol>
<symbol id="k-zip" viewBox="0 0 28 28"><path d="M20 3h6v17h-6z" fill="#aaa" stroke="#777"/><path d="M2 3h18v13H2z" fill="#f5ad1c" stroke="#a97812"/><path d="M3 4h16v4H3z" fill="#ffd45c"/><path d="M10 17h16v3H15v7h-3v-7h-2z" fill="#999" stroke="#777" stroke-width=".6"/></symbol>
<symbol id="k-ref" viewBox="0 0 28 28"><path d="M3 13C4 2 15 0 20 6l4-4v11H14l3-4c-3-3-8-1-9 4zM25 15c-1 11-12 13-17 7l-4 4V15h10l-3 4c3 3 8 1 9-4z" fill="#5f93d6" stroke="#3465a4" stroke-linejoin="round"/></symbol>
<symbol id="f-root" viewBox="0 0 28 28"><path d="M2 2h16l8 7v17H2z" fill="#fffdf4" stroke="#b8860b" stroke-width="2"/><path d="M18 2h8v7z" fill="#c8960c"/><path d="M11 5v3M9 8h4v6H9zM11 14v5M11 16h4M15 14v4h6M5 22h6M14 20h7M14 23h7M6 19v5" stroke="#b32400" fill="none" stroke-width="1.200"/></symbol>
<symbol id="f-dir" viewBox="0 0 28 28"><path d="M3 3h8l2 3h11v18H3z" fill="#f7b48e" stroke="#c9744a"/><path d="M4 8h21v16H4z" fill="#e8562a" stroke="#b83a12"/><path d="M5 9h19v4L5 18z" fill="#f58a5a"/></symbol>
<symbol id="f-net" viewBox="0 0 28 28"><path d="M1 2h19l6 6v18H1z" fill="#e9efe6" stroke="#999"/><path d="M5 3l15 9" stroke="#c22" stroke-width="1.500"/><path d="M20 3 6 13" stroke="#4a8a2a" stroke-width="1.500"/><path d="M0 15h27v12H0z" fill="#1d6b2c"/><path d="M3 25v-7l5 7v-7M16 18h-5v7h5M11 21.500h4M18 18h7M21.500 18v7" stroke="#fff" stroke-width="1.600" fill="none"/></symbol>
</defs>
</svg>

<div class="d-flex vh-100">
<main class="win-ink d-flex flex-column">
  <header class="titlebar d-flex align-items-center flex-shrink-0"><div class="flex-fill w-25"></div><div>*300-016-REV1.0.svg - Inkscape</div>
    <div class="flex-fill w-25 d-flex justify-content-end"><button class="wbtn" aria-label="Minimize"><svg width="16" height="16"><use href="#min"/></svg></button><button class="wbtn" aria-label="Maximize"><svg width="16" height="16"><use href="#max"/></svg></button><button class="wbtn" aria-label="Close"><svg width="16" height="16"><use href="#cls"/></svg></button></div></header>
  <nav class="menus ink-menu d-flex align-items-center flex-shrink-0"><a href="#">File</a><a href="#">Edit</a><a href="#">View</a><a href="#">Layer</a><a href="#">Object</a><a href="#">Path</a><a href="#">Text</a><a href="#">Filters</a><a href="#">Extensions</a><a href="#">Help</a></nav>
  <div class="textbar d-flex align-items-center">
    <div class="fld d-flex align-items-center" style="width:205px"><input class="flex-fill" aria-label="Font family" value="sans-serif"><svg width="18" height="20" viewBox="0 0 18 20"><path d="M2 2h10l4 4v12H2z" fill="#f4f4f4" stroke="#444"/><path d="M4 5h6M4 8h8M4 11h9M4 14h6" stroke="#3465a4" stroke-width="2"/><path d="M11 13h5M13.500 13v5M11 18h5" stroke="#000"/></svg></div>
    <button class="drop grad" aria-label="Font list"><svg width="12" height="9"><use href="#down"/></svg></button>
    <div class="fld d-flex" style="width:28px"><input class="w-100" aria-label="Font size" value="32"></div>
    <button class="drop grad" aria-label="Size list"><svg width="12" height="9"><use href="#down"/></svg></button>
    <div class="fld d-flex" style="width:68px"><input class="w-100" aria-label="Font style" value="Normal"></div>
    <button class="drop grad" aria-label="Style list"><svg width="12" height="9"><use href="#down"/></svg></button>
    <div class="d-flex align-items-center"><i class="vsep ms-1 me-2"></i>
      <button class="pressed" style="width:32px;height:33px" aria-label="Align left"><svg class="i22"><use href="#al"/></svg></button><button style="width:36px" aria-label="Align center"><svg class="i22"><use href="#ac"/></svg></button><button style="width:32px" aria-label="Align right"><svg class="i22"><use href="#ar"/></svg></button><button style="width:36px" aria-label="Justify"><svg class="i22"><use href="#aj"/></svg></button>
      <i class="vsep mx-1"></i><button style="width:32px" aria-label="Superscript"><svg class="i22"><use href="#sup"/></svg></button><button style="width:30px" aria-label="Subscript"><svg class="i22"><use href="#sub"/></svg></button><i class="vsep mx-1"></i></div>
    <div class="d-flex align-items-center" id="spins"></div>
    <i class="vsep mx-1"></i>
    <button class="pressed" style="width:28px;height:33px" aria-label="Horizontal text"><svg width="18" height="18" viewBox="0 0 18 18"><path d="M1 1h16v16H1z" fill="#e4e4e4" stroke="#555"/><path d="M3 7l2-4h1l2 4M4 6h3M9 5h6M3 10h12M3 14h12" stroke="#333" fill="none" stroke-width="1.300"/></svg></button>
    <button style="width:28px;height:33px" aria-label="Vertical text"><svg width="18" height="18" viewBox="0 0 18 18"><path d="M1 1h16v16H1z" fill="#f4f4f4" stroke="#666"/><path d="M10 7l2-4h1l2 4M11 6h3M4 3v12M8 3v12M13 9v6" stroke="#444" fill="none" stroke-width="1.300"/></svg></button>
  </div>
  <section class="d-flex flex-fill" style="min-height:0">
    <div class="toolbox d-flex flex-column" id="toolbox"></div>
    <div class="d-flex flex-column flex-fill" style="min-width:0">
      <div class="d-flex align-items-end" style="height:16px;flex:none"><div style="width:21px"></div><svg id="hruler" class="flex-fill" height="13" style="width:0"></svg><div style="width:21px"></div></div>
      <div class="d-flex flex-fill" style="min-height:0">
        <svg id="vruler" width="21" height="100%"></svg>
        <div class="art flex-fill"><div>300-020</div><div>REV 1.0</div><i class="caret-bar"></i></div>
        <div class="d-flex flex-column align-items-center" style="width:21px">
          <button class="grad" style="width:16px;height:16px;margin-top:-10px" aria-label="Lock guides"><svg width="8" height="10" viewBox="0 0 8 10"><path d="M2 1h4v8H4V4H2z" fill="none" stroke="#777"/></svg></button>
          <div class="trough flex-fill" style="width:13px;margin-top:4px;padding:190px 3px 0"><div class="thumb" style="height:501px"></div></div>
        </div>
      </div>
      <div class="d-flex align-items-center" style="height:20px;flex:none"><div class="trough flex-fill" style="height:13px;margin-left:20px;padding:3px 0 0 300px"><div class="thumb" style="height:7px;width:1160px"></div></div>
        <div class="d-flex justify-content-center" style="width:21px"><svg width="14" height="14" viewBox="0 0 14 14"><path d="M2 1l11 9-9 3z" fill="#9ab"/><path d="M2 1l5 4-4 4z" fill="#3a8a4a"/><path d="M3 9l1 4 5-2z" fill="#33a"/><path d="M8 6l5 4-4 1z" fill="#b44"/></svg></div></div>
    </div>
    <div class="d-flex align-items-center justify-content-center" style="width:9px"><svg width="3" height="24"><path d="M1.500 0v24" stroke="#bbb" stroke-width="2" stroke-dasharray="2 3"/></svg></div>
    <div class="cmds d-flex flex-column align-items-center" id="cmds"></div>
    <div class="snaps d-flex flex-column align-items-center" id="snaps"></div>
  </section>
  <section class="d-flex flex-shrink-0">
    <div class="flex-fill" style="min-width:0;border-top:1px solid #999">
      <div class="swatches d-flex" id="swatches"><svg width="17" height="17"><path d="M0 0h17v17H0z" fill="#fff"/><path d="M1 1l15 15M16 1 1 16" stroke="#7a1a1a" stroke-width="1.400"/></svg></div>
      <div class="trough" style="height:13px;margin-top:1px;padding:3px"><div class="thumb" style="height:7px;width:520px"></div></div>
    </div>
    <button style="width:12px;height:16px" aria-label="Palette menu"><svg width="10" height="12" viewBox="0 0 10 12"><path d="M7 1 2 6l5 5" fill="none" stroke="#8a8a8a" stroke-width="2.200"/></svg></button>
  </section>
  <footer class="status d-flex align-items-center">
    <div style="width:71px;padding-left:2px">Fill:<br>Stroke:</div><div style="width:58px">N/A<br>N/A</div>
    <label for="opac" style="width:12px">O:</label>
    <div class="spin off d-flex" style="width:47px"><input id="opac" value="0" disabled><div class="steps d-flex flex-column"><button disabled aria-label="More"><svg width="8" height="6" opacity=".5"><use href="#up"/></svg></button><button disabled aria-label="Less"><svg width="8" height="6" opacity=".5"><use href="#down"/></svg></button></div></div>
    <i class="vsep" style="margin-left:2px"></i>
    <button style="width:24px" aria-label="Toggle layer visibility"><svg width="14" height="14" viewBox="0 0 14 14"><ellipse cx="7" cy="8" rx="6" ry="3.500" fill="#fff" stroke="#111"/><circle cx="7" cy="8" r="3"/><path d="M1 4l2 2M4 2l1 3M7 1v3M10 2 9 5M13 4l-2 2" stroke="#111"/></svg></button>
    <button style="width:22px" aria-label="Lock layer"><svg width="12" height="14" viewBox="0 0 12 14"><path d="M4 7V3c0-2 5-2 5 0v3" fill="none" stroke="#222" stroke-width="1.400"/><path d="M2 7h8v6H2z" fill="#f3e99a" stroke="#222"/><path d="M6 9v2" stroke="#222"/></svg></button>
    <div class="position-relative grad" style="width:107px;height:23px"><select class="w-100 h-100 ps-1 d-block" style="appearance:none;color:#2e3436" aria-label="Layer"><option>•TEXT</option></select><svg class="position-absolute end-0 top-0 m-1 pe-none" width="14" height="12"><use href="#down"/></svg></div>
    <div style="padding-left:6px" class="flex-fill text-nowrap"><b>Click</b> to edit the text, <b>drag</b> to select part of the text.</div>
    <i class="vsep me-1"></i>
    <div style="width:18px">X:<br>Y:</div><div class="mono" style="width:32px">27.37<br>22.07</div>
    <label for="zoom" style="width:10px">Z:</label>
    <div class="spin d-flex" style="width:56px;margin-right:19px;padding-left:7px"><input id="zoom" class="flex-fill" value="560%"><div class="steps d-flex flex-column"><button aria-label="Zoom in"><svg width="9" height="7"><use href="#up"/></svg></button><button aria-label="Zoom out"><svg width="9" height="7"><use href="#down"/></svg></button></div></div>
  </footer>
</main>

<aside class="win-side d-flex flex-column">
  <nav class="topbar d-flex align-items-center flex-shrink-0">
    <div class="d-flex align-items-center flex-fill w-25"><a href="#">Activities</a><svg width="14" height="14" viewBox="0 0 14 14" style="margin:0 7px 4px 20px"><path d="M7 1l6 6-3 2 1 2H3l1-2-3-2z" fill="#40484f"/><path d="M7 1l3 3-2 1-1-1-2 1-1-1z" fill="#fff"/></svg><a href="#">Inkscape</a><svg width="10" height="6" class="ms-1"><path d="M0 0h10L5 6z" fill="#ddd"/></svg></div>
    <div style="white-space:pre">Tue  3 Apr, 14:14</div>
    <div class="d-flex align-items-center justify-content-end flex-fill w-25"><span>en₁</span><svg width="10" height="6" style="margin:0 32px 0 6px"><path d="M0 0h10L5 6z" fill="#ddd"/></svg>
      <svg width="12" height="14" style="margin-right:13px"><path d="M1.500 2.500h9v10h-9zM4 1h4" fill="none" stroke="#ddd" stroke-width="2"/></svg>
      <svg width="15" height="14" style="margin-right:13px"><path d="M0 5h3l4-4v12L3 9H0z" fill="#ddd"/><path d="M9 4v6M11 2v8" stroke="#888"/><path d="M10 9l4 4M14 9l-4 4" stroke="#ddd" stroke-width="1.500"/></svg>
      <svg width="11" height="14" style="margin-right:13px"><path d="M1 2h9v11H1zM4 .5h3" fill="none" stroke="#888" stroke-width="2"/><path d="M7 3 3 8h2v3l3-5H6z" fill="#eee"/></svg>
      <svg width="10" height="6"><path d="M0 0h10L5 6z" fill="#ddd"/></svg></div>
  </nav>
  <header class="titlebar idle d-flex align-items-center flex-shrink-0"><div class="flex-fill w-25"></div><div class="text-nowrap">KiCad 4.0.2+dfsg1-stable /home/cgooding/craig.gooding66@gmail.com/Home/Utonomy/Actuator_POC/300-020.pro</div>
    <div class="flex-fill w-25 d-flex justify-content-end"><button class="wbtn" aria-label="Minimize"><svg width="16" height="16"><use href="#min"/></svg></button><button class="wbtn" aria-label="Maximize"><svg width="16" height="16"><use href="#max"/></svg></button><button class="wbtn" aria-label="Close"><svg width="16" height="16"><use href="#cls"/></svg></button></div></header>
  <nav class="menus ki-menu d-flex align-items-center flex-shrink-0"><a href="#">File</a><a href="#">Browse</a><a href="#">Preferences</a><a href="#">Tools</a><a href="#">Help</a></nav>
  <div class="ki-tools d-flex align-items-center flex-shrink-0"><button aria-label="New project"><svg><use href="#k-nb"/></svg></button><button aria-label="New from template"><svg><use href="#k-nb2"/></svg></button><button aria-label="Open project"><svg><use href="#k-up"/></svg></button><button aria-label="Save project"><svg><use href="#k-dn"/></svg></button><i class="vsep"></i><button aria-label="Archive"><svg><use href="#k-zip"/></svg></button><i class="vsep"></i><button aria-label="Refresh"><svg><use href="#k-ref"/></svg></button></div>
  <section class="d-flex flex-fill" style="background:var(--ui);min-height:0">
    <div class="tree">
      <div class="node d-flex align-items-center" style="padding-left:10px"><button class="exp" style="margin-right:10px" aria-label="Collapse">−</button><svg class="fi"><use href="#f-root"/></svg><span class="fw-semibold text-white h-100 d-flex align-items-center" style="background:#3a80cd">300-020.pro</span></div>
      <div class="node d-flex align-items-center" style="padding-left:25px"><button class="exp" style="margin-right:10px" aria-label="Expand">+</button><svg class="fi"><use href="#f-dir"/></svg><span>Plots</span></div>
      <div class="node d-flex align-items-center" style="padding-left:48px"><svg class="fi"><use href="#k-pcb"/></svg><span>300-020.kicad_pcb</span></div>
      <div class="node d-flex align-items-center" style="padding-left:48px"><svg class="fi"><use href="#f-net"/></svg><span>300-020.net</span></div>
      <div class="node d-flex align-items-center" style="padding-left:48px"><svg class="fi"><use href="#k-sch"/></svg><span>300-020.sch</span></div>
      <div class="node d-flex align-items-center" style="padding-left:48px"><svg class="fi"><use href="#book"/></svg><span>300-020-cache.lib</span></div>
      <div class="node d-flex align-items-center" style="padding-left:48px"><svg class="fi"><use href="#k-sch"/></svg><span>_saved_300-020.sch</span></div>
    </div>
    <div class="sash"></div>
    <div class="d-flex flex-column" style="flex:1110 1 0;min-width:0">
      <div class="launch d-flex"><div class="launch-in d-flex" id="launch"></div></div>
      <div class="log flex-fill"><p>Project name:</p><p>/home/cgooding/craig.gooding66@gmail.com/Home/Utonomy/Actuator_POC/300-020.pro</p></div>
    </div>
  </section>
  <div style="height:21px;background:var(--ui);flex:none"></div>
</aside>
</div>

<script>
const $ = id => document.getElementById(id);
const use = (id, cls) => `<svg class="${cls}"><use href="#${id}"/></svg>`;

// toolbox
$('toolbox').innerHTML = ['sel Select','node Edit nodes','tweak Tweak','zoom Zoom','meas Measure','rect Rectangle','box 3D box','ell Ellipse','star Star','spi Spiral','pen Pencil','bez Bezier','cal Calligraphy','text Text','spray Spray','era Eraser','buck Bucket','grad Gradient','drop Dropper','conn Connector']
  .map(s => { const [k, ...n] = s.split(' '); return `<button class="tool${k==='text'?' pressed':''}" aria-label="${n.join(' ')}">${use('t-'+k,'i22')}</button>`; }).join('');

// command bar, "-" is a separator
$('cmds').innerHTML = 'new open save print - imp exp - undo redo - copy cut paste - zs zd zp - dup clo unl - grp ung - fill T lay xml'.split(' ')
  .map(k => k === '-' ? '<i class="hsep"></i>' : `<button class="tool" aria-label="${k}">${use('c-'+k,'i22')}</button>`).join('')
  + '<button style="margin-top:20px" aria-label="More"><svg width="10" height="12"><use href="#chev"/></svg></button>';

// snap bar, "!" marks a pressed toggle
$('snaps').innerHTML = '!on - on bb bc be bm - !on path int cusp smo mid - !on oth ctr !txt - page !grid !guide'.split(' ')
  .map(k => k === '-' ? '<i class="hsep"></i>' : `<button class="${k[0]==='!'?'pressed':''}" aria-label="snap ${k.replace('!','')}">${use('s-'+k.replace('!',''),'i18')}</button>`).join('');

$('launch').innerHTML = 'sch lib pcb mod ger bmp calc pl'.split(' ').map(k => `<button class="grad" aria-label="${k}"><svg><use href="#k-${k}"/></svg></button>`).join('');

// spacing fields of the text bar
const A = (x, y, c, s = 9) => `<use href="#ga" x="${x}" y="${y}" width="${s}" height="${s}" color="${c}"/>`;
const K = '#222', B = '#3465a4';
const glyphs = [
  ['Line height', '1.25', A(9,3,K)+A(9,13,B)],
  ['Letter spacing', '0.00', A(3,8,K)+A(12,8,B)],
  ['Word spacing', '0.00', `<path d="M3 10v7M9 11H6v5h3M10 7v10" stroke="${K}" stroke-width="2" fill="none"/><path d="M16 7v9h2M14 10h4M21 10v7M21 6v2" stroke="${B}" stroke-width="2" fill="none"/>`],
  ['Kerning', '0.00', A(2,8,K)+A(13,8,B)+'<path d="M12 6v14" stroke="#333"/>'],
  ['Vertical shift', '0.00', A(2,10,K)+A(13,6,B)+'<path d="M12 5v16" stroke="#333"/>'],
  ['Rotation', '0.00', A(2,7,K)+`<path d="M13 16l8-7v10M15 14l5 3" stroke="${B}" stroke-width="2.200" fill="none"/><path d="M12 5v14" stroke="#333"/>`]];
$('spins').innerHTML = glyphs.map(([n, v, g]) => `<svg class="lbl" viewBox="0 0 24 24">${g}</svg><div class="spin d-flex ms-1"><input aria-label="${n}" value="${v}"><div class="steps d-flex flex-column"><button aria-label="Increase"><svg width="9" height="7"><use href="#up"/></svg></button><button aria-label="Decrease"><svg width="9" height="7"><use href="#down"/></svg></button></div></div>`).join('');

// rulers: 19.86 px per unit
const U = 19.86, OX = 453, OY = 675;
let h = '<path d="M0 12.500h4000" stroke="#2e3436"/>', d = '';
for (let n = -57; n <= 163; n++) {
  const x = Math.round(OX + n * U * .4) + .5;
  d += `M${x} ${n % 5 ? 7 : 1}V13`;
  if (n % 10 === 0) h += `<text x="${x + 1}" y="8" font-size="9" fill="#2e3436">${n * .4}</text>`;
}
$('hruler').innerHTML = h + `<path d="${d}" stroke="#2e3436"/><path d="M919 8h9l-4 5z" fill="#2e3436"/>`;
let v = '<path d="M19.500 0v4000" stroke="#2e3436"/>'; d = '';
for (let n = -21; n <= 68; n++) {
  const y = Math.round(OY - n * U / 2) + .5;
  d += `M${n % 10 === 0 ? 8 : n % 2 ? 16 : 14} ${y}H20`;
  // the lowest label has room for two characters only
  if (n % 10 === 0) String(n / 2).slice(0, 2).split('').forEach((c, i) => v += `<text x="8" y="${y + 7 + i * (n < 0 ? 5 : 8)}" font-size="8" fill="#2e3436">${c}</text>`);
}
$('vruler').innerHTML = v + `<path d="${d}" stroke="#2e3436"/><path d="M14 255v9l6-4z" fill="#2e3436"/>`;

// palette
const pal = `000000 1a1a1a 333333 4d4d4d 666666 808080 999999 b3b3b3 cccccc e6e6e6 ececec f2f2f2 f9f9f9 ffffff
800000 ff0000 808000 ffff00 008000 00ff00 008080 00ffff 000080 0000ff 800080 ff00ff
2b0000 550000 800000 aa0000 d40000 ff0000 ff2a2a ff5555 ff8080 ffaaaa ffd5d5 280b0b 501616 782121 a02c2c c83737 d35f5f de8787 e9afaf f4d7d7
241c1c 483737 6c5353 916f6f ac9393 c8b7b7 e3dbdb 2b1100 552200 803300 aa4400 d45500 ff6600 ff7f2a ff9955 ffb380 ffccaa ffe6d5
28170b 502d16 784421 a05a2c c87137 d38d5f deaa87 e9c6af f4e3d7 241f1c 483e37 6c5d53 917c6f ac9d93 c8beb7 e3dedb
2b2200 554400 806600 aa8800 d4aa00 ffcc00 ffd42a ffdd55 ffe680 ffeeaa fff6d5 28220b 504416 786721 a0892c c8ab37 d3bc5f decd87 e9ddaf f4eed7
24221c 484537 6c6753 918a6f aca793 c8c4b7 e3e2db 222b00 445500 668000 88aa00 aad400 ccff00 d4ff2a ddff55 e5ff80 eeffaa f6ffd5 23280b`.split(/\s+/);
$('swatches').insertAdjacentHTML('beforeend', pal.map(c => `<i style="background:#${c}"></i>`).join(''));
</script>
</body>
</html>
